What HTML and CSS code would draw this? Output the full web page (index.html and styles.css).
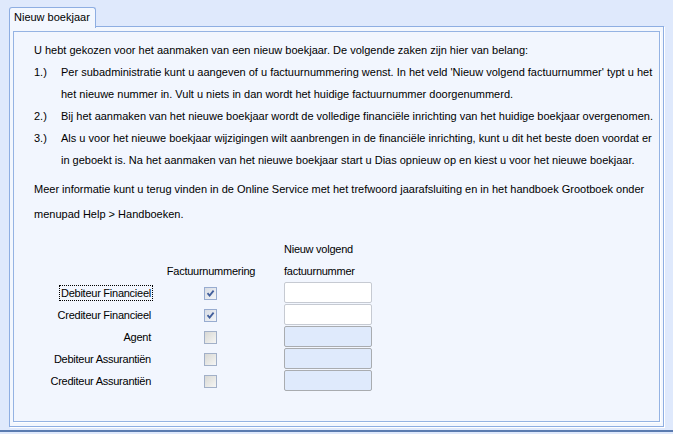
FILE: index.html
```html
<!DOCTYPE html>
<html lang="nl">
<head>
    <meta charset="UTF-8">
    <title>Nieuw boekjaar</title>
    <link rel="stylesheet" href="styles.css">
</head>
<body>
    <div class="window">
        <div class="tab-strip">
            <div class="tab">Nieuw boekjaar</div>
        </div>
        <div class="tab-panel">
            <div class="group-box">
                <p class="intro">U hebt gekozen voor het aanmaken van een nieuw boekjaar. De volgende zaken zijn hier van belang:</p>
                <div class="item">
                    <span class="item-nr">1.)</span>
                    <span>Per subadministratie kunt u aangeven of u factuurnummering wenst. In het veld 'Nieuw volgend factuurnummer' typt u het<br>het nieuwe nummer in. Vult u niets in dan wordt het huidige factuurnummer doorgenummerd.</span>
                </div>
                <div class="item">
                    <span class="item-nr">2.)</span>
                    <span>Bij het aanmaken van het nieuwe boekjaar wordt de volledige financiële inrichting van het huidige boekjaar overgenomen.</span>
                </div>
                <div class="item">
                    <span class="item-nr">3.)</span>
                    <span>Als u voor het nieuwe boekjaar wijzigingen wilt aanbrengen in de financiële inrichting, kunt u dit het beste doen voordat er<br>in geboekt is. Na het aanmaken van het nieuwe boekjaar start u Dias opnieuw op en kiest u voor het nieuwe boekjaar.</span>
                </div>
                <p class="more-info">Meer informatie kunt u terug vinden in de Online Service met het trefwoord jaarafsluiting en in het handboek Grootboek onder<br>menupad Help &gt; Handboeken.</p>

                <div class="form-grid">
                    <div></div>
                    <div></div>
                    <div class="col-input">Nieuw volgend</div>

                    <div></div>
                    <div class="col-check">Factuurnummering</div>
                    <div class="col-input">factuurnummer</div>

                    <div class="label"><span class="focused">Debiteur Financieel</span></div>
                    <div class="col-check"><span class="checkbox checked"></span></div>
                    <div class="col-input"><div class="text-input"></div></div>

                    <div class="label">Crediteur Financieel</div>
                    <div class="col-check"><span class="checkbox checked"></span></div>
                    <div class="col-input"><div class="text-input"></div></div>

                    <div class="label">Agent</div>
                    <div class="col-check"><span class="checkbox"></span></div>
                    <div class="col-input"><div class="text-input disabled"></div></div>

                    <div class="label">Debiteur Assurantiën</div>
                    <div class="col-check"><span class="checkbox"></span></div>
                    <div class="col-input"><div class="text-input disabled"></div></div>

                    <div class="label">Crediteur Assurantiën</div>
                    <div class="col-check"><span class="checkbox"></span></div>
                    <div class="col-input"><div class="text-input disabled"></div></div>
                </div>
            </div>
        </div>
    </div>
</body>
</html>
```

FILE: styles.css
```css
body {
    margin: 0;
    padding: 0;
    background: #dfe9fc;
    color: #000;
    font-family: "Liberation Sans", Arial, sans-serif;
    font-size: 11px;
}

.window {
    height: 432px;
    padding: 7px 0 0 9px;
    box-sizing: border-box;
    border-bottom: 2px solid #5a7bb0;
}

.tab-strip {
    display: flex;
    height: 20px;
}

.tab {
    position: relative;
    z-index: 1;
    width: 81px;
    height: 20px;
    padding: 0 0 0 4px;
    line-height: 19px;
    background: #f3f7fe;
    border: 1px solid #8eaee2;
    border-bottom: none;
    border-radius: 3px 3px 0 0;
    white-space: nowrap;
}

.tab-panel {
    width: 655px;
    height: 401px;
    padding: 4px 3px 4px 3px;
    background: #f3f7fe;
    border: 1px solid #8eaee2;
    box-shadow: 1px 1px 0 #fff;
    margin-top: -1px;
    box-sizing: border-box;
}

.group-box {
    height: 391px;
    box-sizing: border-box;
    padding: 7px 0 0 20px;
    border: 1px solid #95b3e3;
    box-shadow: 1px 1px 0 #fff;
    background: #f2f6fe;
    white-space: nowrap;
}

.intro {
    margin: 0;
    line-height: 22px;
}

.item {
    display: grid;
    grid-template-columns: 27px auto;
    line-height: 22px;
}

.more-info {
    margin: 6px 0 0;
    line-height: 25px;
}

.form-grid {
    display: grid;
    grid-template-columns: 117px 120px 101px;
    grid-auto-rows: 22px;
    align-items: center;
    margin-top: 11px;
    letter-spacing: -0.25px;
}

.label {
    text-align: right;
}

.focused {
    outline: 1px dotted #000;
    outline-offset: 1px;
}

.col-check {
    display: flex;
    justify-content: center;
}

.col-input {
    padding-left: 13px;
}

.checkbox {
    display: block;
    width: 11px;
    height: 11px;
    border: 1px solid #a2b0c8;
    background: linear-gradient(135deg, #d8d8d4, #f6f6f4);
    margin-left: -1px;
}

.checkbox.checked {
    border-color: #98acd0;
    background:
        url("data:image/svg+xml;utf8,<svg xmlns='http://www.w3.org/2000/svg' width='11' height='11'><path d='M2.5 5.2 L4.6 7.6 L8.6 2.6' fill='none' stroke='%23425f9c' stroke-width='1.8'/></svg>") no-repeat,
        linear-gradient(135deg, #d8dce4, #f4f6f8);
}

.text-input {
    width: 86px;
    height: 19px;
    border: 1px solid #c6cad2;
    border-radius: 2px;
    background: #fff;
    margin-top: -1px;
}

.text-input.disabled {
    background: #dfeafc;
    border-color: #a9acb0;
}
```
